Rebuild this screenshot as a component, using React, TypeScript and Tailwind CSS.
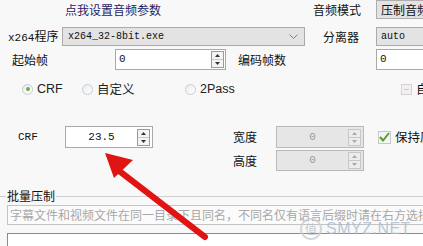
import React from "react";

const cjk = { fontFamily: '"Noto Sans CJK SC", "Noto Sans", sans-serif' };
const mono = { fontFamily: '"Liberation Mono", "Noto Sans CJK SC", monospace' };

function Spinner({ disabled }: { disabled?: boolean }) {
  const c = disabled ? "#a8a8a8" : "#333";
  return (
    <div
      className={`shrink-0 flex flex-col w-[13px] h-[17px] border ${
        disabled ? "border-[#c8c8c8] bg-[#ececec]" : "border-[#9a9a9a] bg-[#f4f4f4]"
      }`}
    >
      <div className="flex-1 flex items-center justify-center border-b border-[#c8c8c8]">
        <svg width="5" height="3" viewBox="0 0 5 3">
          <path d="M0 3 L2.5 0 L5 3 Z" fill={c} />
        </svg>
      </div>
      <div className="flex-1 flex items-center justify-center">
        <svg width="5" height="3" viewBox="0 0 5 3">
          <path d="M0 0 L2.5 3 L5 0 Z" fill={c} />
        </svg>
      </div>
    </div>
  );
}

function NumBox({
  value,
  disabled,
  className,
}: {
  value: string;
  disabled?: boolean;
  className: string;
}) {
  return (
    <div
      className={`shrink-0 flex items-center border pr-[2px] ${
        disabled ? "bg-[#e6e6e6] border-[#b9b9b9]" : "bg-white border-[#a9a9a9]"
      } ${className}`}
    >
      <span
        className={`flex-1 text-center text-[11px] ${disabled ? "text-[#9a9a9a]" : "text-[#111]"}`}
        style={mono}
      >
        {value}
      </span>
      <Spinner disabled={disabled} />
    </div>
  );
}

function Radio({ checked, label, sans }: { checked?: boolean; label: string; sans?: boolean }) {
  return (
    <div className="flex items-center gap-[4px]">
      <span className="shrink-0 w-[11px] h-[11px] rounded-full border border-[#c6ccd2] bg-gradient-to-br from-[#e8ecf0] to-white flex items-center justify-center">
        {checked && <span className="w-[4px] h-[4px] rounded-full bg-[#6cae3f]" />}
      </span>
      <span
        className="text-[12.5px] text-[#222]"
        style={sans ? { fontFamily: '"Liberation Sans", sans-serif' } : cjk}
      >
        {label}
      </span>
    </div>
  );
}

export default function App() {
  return (
    <div className="relative w-[423px] h-[246px] overflow-hidden bg-[#f8f8f8] text-[#111]" style={cjk}>
      {/* row 1 */}
      <div className="flex items-center h-[20px] whitespace-nowrap">
        <span className="shrink-0 w-[313px] pl-[65px] text-[12px] text-[#1d1d66]">点我设置音频参数</span>
        <span className="shrink-0 w-[63px] text-[12px]">音频模式</span>
        <div className="flex-1 min-w-0 h-[19px] self-start bg-[#e3e3e3] border border-[#aeaeae] border-r-0 pl-[4px] text-[12px] leading-[17px] overflow-hidden">
          压制音频
        </div>
      </div>

      {/* row 2 */}
      <div className="flex items-center h-[19px] mt-[7px] whitespace-nowrap">
        <span className="shrink-0 w-[62px] pl-[8px] text-[12px]">
          <span className="text-[11px]" style={mono}>x264</span>程序
        </span>
        <div className="shrink-0 w-[243px] h-full flex items-center bg-[#e3e3e3] border border-[#ababab] pl-[5px] pr-[6px]">
          <span className="flex-1 text-[10px]" style={mono}>x264_32-8bit.exe</span>
          <svg width="9" height="6" viewBox="0 0 9 6">
            <path d="M0.5 0.5 L4.5 4.5 L8.5 0.5" stroke="#808080" fill="none" strokeWidth="1" />
          </svg>
        </div>
        <span className="shrink-0 w-[54px] text-right text-[12px]">分离器</span>
        <span className="shrink-0 w-[17px]" />
        <div className="flex-1 min-w-0 h-full bg-[#e3e3e3] border border-[#ababab] border-r-0 pl-[4px] text-[10px] leading-[17px]" style={mono}>
          auto
        </div>
      </div>

      {/* row 3 */}
      <div className="flex items-center h-[21px] mt-[3px] whitespace-nowrap">
        <span className="shrink-0 w-[115px] pl-[12px] text-[12px]">起始帧</span>
        <div className="shrink-0 w-[111px] h-full flex items-center bg-white border border-[#a9a9a9] pl-[3px] pr-[1px]">
          <span className="flex-1 text-[11px]" style={mono}>0</span>
          <Spinner />
        </div>
        <span className="shrink-0 w-[150px] pl-[12px] text-[12px]">编码帧数</span>
        <div className="flex-1 min-w-0 h-full bg-white border border-[#a9a9a9] border-r-0 pl-[3px] text-[11px] leading-[19px]" style={mono}>
          0
        </div>
      </div>

      {/* row 4 - radios */}
      <div className="flex items-center h-[18px] mt-[10px] whitespace-nowrap">
        <div className="shrink-0 w-[82px] pl-[22px]">
          <Radio checked label="CRF" sans />
        </div>
        <div className="shrink-0 w-[103px]">
          <Radio label="自定义" />
        </div>
        <div className="shrink-0 w-[216px]">
          <Radio label="2Pass" sans />
        </div>
        <span className="shrink-0 w-[11px] h-[11px] border border-[#d3d3d3] bg-[#f4eeee] flex items-center justify-center">
          <span className="w-[5px] h-[1px] bg-[#e8c0c0]" />
        </span>
        <span className="shrink-0 ml-[4px] text-[12.5px]">自动</span>
      </div>

      {/* row 5 */}
      <div className="flex items-center h-[22px] mt-[28px] whitespace-nowrap">
        <span className="shrink-0 w-[65px] pl-[18px] text-[11px]" style={mono}>CRF</span>
        <NumBox value="23.5" className="w-[88px] h-full" />
        <span className="shrink-0 w-[80px]" />
        <span className="shrink-0 w-[43px] text-[12px]">宽度</span>
        <NumBox value="0" disabled className="w-[88px] h-full" />
        <span className="shrink-0 w-[14px]" />
        <span className="shrink-0 w-[13px] h-[13px] border border-[#c9c9c9] bg-[#f3f6f3] flex items-center justify-center">
          <svg width="11" height="10" viewBox="0 0 11 10">
            <path d="M1 5 L4 8.5 L10 1" stroke="#55a02b" strokeWidth="2" fill="none" />
          </svg>
        </span>
        <span className="shrink-0 ml-[4px] text-[12.5px]">保持原比例</span>
      </div>

      {/* row 6 */}
      <div className="flex items-center h-[21px] mt-[2px] whitespace-nowrap">
        <span className="shrink-0 w-[233px]" />
        <span className="shrink-0 w-[43px] text-[12px]">高度</span>
        <NumBox value="0" disabled className="w-[88px] h-full" />
      </div>

      {/* batch group */}
      <div className="flex items-center h-[12px] mt-[19px]">
        <span className="w-[6px] h-px bg-[#d0d0d0]" />
        <span className="px-[1px] text-[12px] leading-[12px]">批量压制</span>
        <span className="flex-1 h-px bg-[#d0d0d0]" />
      </div>
      <div className="ml-[7px] mt-[3px] h-[20px] border border-[#c4c4c4] border-r-0 bg-[#fbfbfb] pl-[2px] overflow-hidden whitespace-nowrap text-[12px] leading-[18px] text-[#a8a8a8]">
        字幕文件和视频文件在同一目录下且同名，不同名仅有语言后缀时请在右方选择
      </div>
      <div className="ml-[7px] mt-[8px] h-[20px] border-t border-l border-[#8c8c8c] bg-white" />

      {/* red arrow overlay */}
      <svg className="absolute left-0 top-0 pointer-events-none" width="423" height="246" viewBox="0 0 423 246">
        <path d="M205 237 L118 170" stroke="#e11414" strokeWidth="6" strokeLinecap="round" />
        <path d="M105 153 L133 160 L114 178 Z" fill="#e11414" />
      </svg>

      {/* watermark */}
      <div className="absolute left-[300px] top-[217px] flex items-center gap-[4px] opacity-80 pointer-events-none">
        <span className="w-[22px] h-[22px] rounded-full border-2 border-[#c9d0d8] text-[12px] text-[#b8c0ca] flex items-center justify-center">
          值
        </span>
        <span
          className="text-[16px] text-[#a9bccf] tracking-[0.5px]"
          style={{ fontFamily: '"Liberation Sans", sans-serif' }}
        >
          SMYZ.NET
        </span>
      </div>
    </div>
  );
}
